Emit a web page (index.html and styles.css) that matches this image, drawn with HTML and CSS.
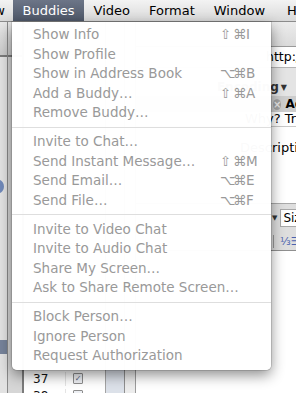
FILE: index.html
```html
<!DOCTYPE html>
<html lang="en">

<head>
    <meta charset='utf-8'>
    <title>Buddies menu</title>
    <link rel="stylesheet" href="styles.css">
</head>

<body>
    <div class='screen'>
        <div class='mbar'>
            <div class='mt cut'><span>View</span></div>
            <div class='mt on'>Buddies</div>
            <div class='mt'>Video</div>
            <div class='mt'>Format</div>
            <div class='mt'>Window</div>
            <div class='mt'>Help</div>
        </div>

        <div class='win'>
            <div class='side'>
                <div class='shead'></div>
                <div class='sbody'>
                    <div class='dot'></div>
                    <div class='sel'></div>
                </div>
            </div>
            <div class='side2'>
                <div class='shead'></div>
            </div>
            <div class='list'>
                <div class='row'><span class='num'>37</span><span class='chk'>&#10003;</span></div>
                <div class='row'><span class='num'>38</span><span class='chk'></span></div>
            </div>
            <div class='col4'></div>
            <div class='col5'></div>
            <div class='pane'>
                <div class='tbar'></div>
                <div class='url'>http://www.adium.im/</div>
                <div class='opts'>Encoding<span class='arr'>&#9660;</span></div>
                <div class='tabs'><span class='x'>&#215;</span>Adium</div>
                <div class='page'>
                    <div class='q'>Why? Try it</div>
                    <div class='d'>Descriptive</div>
                </div>
                <div class='fbar'>
                    <div class='frow'><span class='dd'>&#9660;</span><span class='size'>Size</span></div>
                    <div class='irow'><span class='ic'>&#8531;&#9776;</span></div>
                </div>
                <div class='blank'></div>
            </div>
        </div>

        <div class='menu'>
            <div class='it'><span>Show Info</span><span class='k'><i>&#8679;</i><i>&#8984;</i>I</span></div>
            <div class='it'><span>Show Profile</span></div>
            <div class='it'><span>Show in Address Book</span><span class='k'><i>&#8997;</i><i>&#8984;</i>B</span></div>
            <div class='it'><span>Add a Buddy&#8230;</span><span class='k'><i>&#8679;</i><i>&#8984;</i>A</span></div>
            <div class='it'><span>Remove Buddy&#8230;</span></div>
            <div class='sep'></div>
            <div class='it'><span>Invite to Chat&#8230;</span></div>
            <div class='it'><span>Send Instant Message&#8230;</span><span class='k'><i>&#8679;</i><i>&#8984;</i>M</span></div>
            <div class='it'><span>Send Email&#8230;</span><span class='k'><i>&#8997;</i><i>&#8984;</i>E</span></div>
            <div class='it'><span>Send File&#8230;</span><span class='k'><i>&#8997;</i><i>&#8984;</i>F</span></div>
            <div class='sep'></div>
            <div class='it'><span>Invite to Video Chat</span></div>
            <div class='it'><span>Invite to Audio Chat</span></div>
            <div class='it'><span>Share My Screen&#8230;</span></div>
            <div class='it'><span>Ask to Share Remote Screen&#8230;</span></div>
            <div class='sep'></div>
            <div class='it'><span>Block Person&#8230;</span></div>
            <div class='it'><span>Ignore Person</span></div>
            <div class='it'><span>Request Authorization</span></div>
        </div>
    </div>
</body>

</html>
```

FILE: styles.css
```css
body {
    margin: 0;
    font-family: "DejaVu Sans", "Liberation Sans", sans-serif;
}

.screen {
    position: relative;
    width: 296px;
    height: 393px;
    overflow: hidden;
    background: #fff;
}

/* menu bar */

.mbar {
    display: flex;
    height: 21px;
    border-bottom: 1px solid #8c8c8c;
    background: linear-gradient(#f3f3f3, #d9d9d9);
    font-size: 13px;
    line-height: 21px;
    white-space: nowrap;
    overflow: hidden;
}

.mt {
    flex: none;
    padding: 0 9.5px;
    color: #000;
}

.mt:last-child {
    padding-left: 12.5px;
}

.mt.cut {
    display: flex;
    justify-content: flex-end;
    width: 5px;
    padding: 0 8px 0 0;
    overflow: hidden;
}

.mt.on {
    background: linear-gradient(#6c7587, #4e5768);
    color: #fff;
}

/* window behind the menu */

.win {
    display: flex;
    height: 371px;
}

.win > div {
    flex: none;
}

.side {
    display: flex;
    flex-direction: column;
    width: 7px;
    border-right: 1px solid #8a8a8a;
    background: #e2e2e2;
}

.shead {
    height: 33px;
    border-bottom: 2px solid #7a7a7a;
    background: linear-gradient(#e8e8e8, #c9c9c9);
}

.sbody {
    position: relative;
    flex: 1;
}

.dot {
    position: absolute;
    top: 123px;
    left: -6px;
    width: 10px;
    height: 13px;
    border-radius: 50%;
    background: #6f88b8;
}

.sel {
    position: absolute;
    top: 283px;
    left: 0;
    width: 7px;
    height: 14px;
    background: #76839a;
}

.side2 {
    width: 14px;
    border-right: 2px solid #7b7b7b;
    background: #d6d6d6;
}

.list {
    display: flex;
    flex-direction: column;
    justify-content: flex-end;
    width: 81px;
    border-right: 1px solid #a4a4a4;
    background: #fff;
}

.row {
    display: flex;
    align-items: center;
    flex: none;
    height: 17px;
    font-size: 12px;
}

.row:last-child {
    margin-bottom: -11px;
}

.num {
    width: 32px;
    padding-left: 9px;
    border-right: 1px solid #e4e4e4;
    color: #111;
}

.chk {
    width: 8px;
    height: 9px;
    margin-left: 7px;
    border: 1px solid #8d8d8d;
    border-radius: 1px;
    background: #eef0f4;
    color: #55607a;
    font-size: 8px;
    line-height: 9px;
    text-align: center;
}

.col4 {
    width: 18px;
    border-right: 1px solid #8f8f8f;
    background: #dce1e9;
}

.col5 {
    width: 10px;
    border-right: 1px solid #9c9c9c;
    background: #ececec;
}

.win > .pane {
    display: flex;
    flex-direction: column;
    flex: 1;
    min-width: 0;
    overflow: hidden;
    font-size: 12px;
    white-space: nowrap;
}

.tbar {
    flex: none;
    height: 24px;
    border-bottom: 1px solid #9a9a9a;
    background: linear-gradient(#ececec, #dadada);
}

.url {
    flex: none;
    height: 20px;
    padding-left: 130px;
    line-height: 20px;
    font-size: 12.5px;
    background: #fff;
}

.opts {
    display: flex;
    flex: none;
    justify-content: flex-end;
    height: 17px;
    padding: 11px 9px 0 0;
    border-top: 1px solid #b5b5b5;
    background: #e4e4e4;
    line-height: 17px;
    font-weight: bold;
    color: #333;
}

.arr {
    margin-left: 2px;
    font-size: 8px;
}

.tabs {
    display: flex;
    flex: none;
    align-items: center;
    height: 16px;
    padding-left: 137px;
    background: #cdcdcd;
    font-weight: bold;
}

.x {
    display: inline-block;
    width: 11px;
    height: 11px;
    margin-right: 4px;
    border-radius: 50%;
    background: #a3a3a3;
    color: #e8e8e8;
    font-size: 10px;
    line-height: 11px;
    text-align: center;
}

.page {
    flex: none;
    height: 91px;
    background: #fff;
    font-size: 13px;
}

.q {
    height: 14px;
    padding-left: 109px;
    line-height: 14px;
    border-bottom: 1px solid #c9c9c9;
}

.d {
    margin-top: 13px;
    padding-left: 104px;
    line-height: 15px;
}

.fbar {
    display: flex;
    flex: none;
    flex-direction: column;
    height: 46px;
    border-top: 1px solid #a9a9a9;
    border-bottom: 1px solid #8f8f8f;
    background: #dedede;
}

.frow {
    display: flex;
    align-items: center;
    height: 28px;
    padding-left: 136px;
}

.dd {
    font-size: 7px;
    color: #333;
}

.size {
    height: 16px;
    margin-left: 3px;
    padding-left: 2px;
    flex: 1;
    border: 1px solid #a8a8a8;
    background: #fff;
    line-height: 16px;
    font-size: 12px;
}

.irow {
    display: flex;
    align-items: center;
    height: 18px;
    padding-left: 137px;
}

.ic {
    padding-left: 6px;
    border-left: 1px solid #999;
    color: #4b63b0;
    font-size: 11px;
}

.blank {
    flex: 1;
    background: #fff;
}

/* the open menu */

.menu {
    position: absolute;
    top: 22px;
    left: 12px;
    width: 259px;
    padding: 3px 0 4px;
    border-radius: 0 0 5px 5px;
    background: rgba(255, 255, 255, 0.98);
    box-shadow: 0 0 0 1px rgba(0, 0, 0, 0.12), 0 5px 14px rgba(0, 0, 0, 0.45);
    font-size: 13.5px;
    color: #999;
}

.it {
    display: flex;
    height: 19.5px;
    padding: 0 10px 0 21px;
    line-height: 19.5px;
    white-space: nowrap;
}

.it span:first-child {
    flex: 1;
}

.k {
    width: 41px;
}

.k i {
    display: inline-block;
    width: 13px;
    font-style: normal;
}

.sep {
    height: 1px;
    margin: 4px 0 4.5px;
    background: #dedede;
}
```
